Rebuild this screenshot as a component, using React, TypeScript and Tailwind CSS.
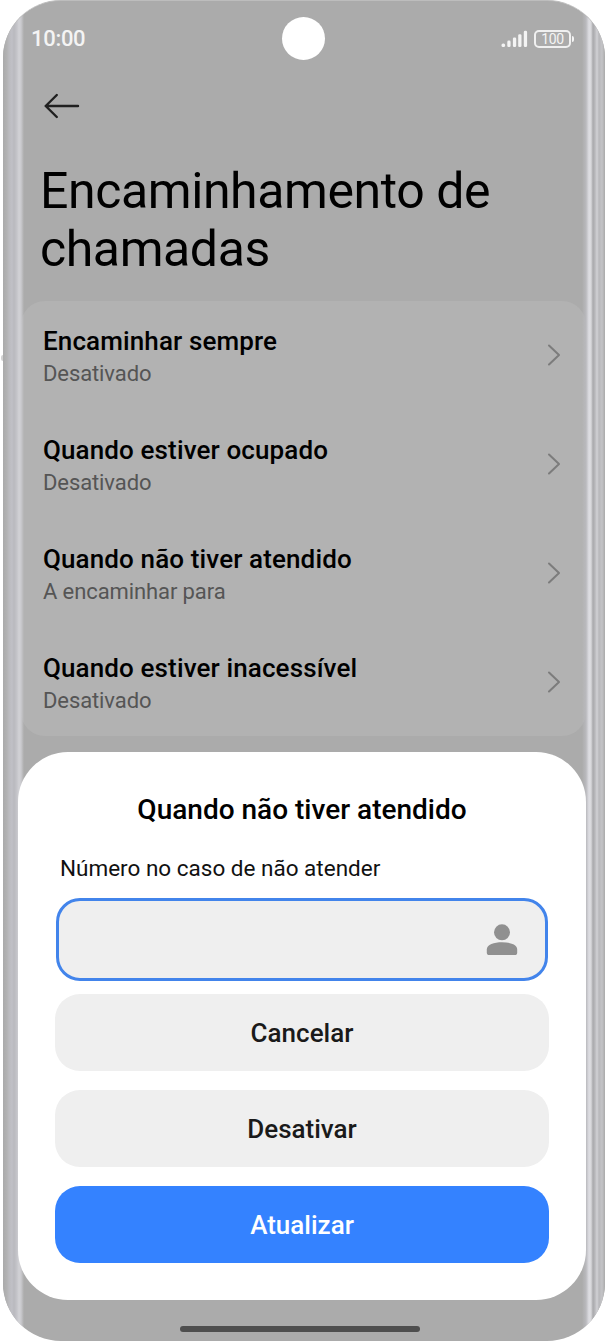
import React from "react";

interface Option {
  title: string;
  status: string;
}

const options: Option[] = [
  { title: "Encaminhar sempre", status: "Desativado" },
  { title: "Quando estiver ocupado", status: "Desativado" },
  { title: "Quando não tiver atendido", status: "A encaminhar para" },
  { title: "Quando estiver inacessível", status: "Desativado" },
];

function StatusBar() {
  return (
    <div className="h-[76px] pl-[28px] pr-[31px] flex justify-between items-center text-[#f4f4f4] relative">
      <span className="text-[22px] leading-[26px] font-medium tracking-[-0.3px]">
        10:00
      </span>
      <div className="absolute left-[279px] top-[16px] w-[43px] h-[43px] rounded-full bg-white" />
      <div className="flex items-center gap-[6px] pb-[1px]">
        <svg width="27" height="18" viewBox="0 0 27 18" fill="currentColor">
          <rect x="0.5" y="13.4" width="3.6" height="3.6" rx="1.5" />
          <rect x="6.3" y="10.6" width="3.3" height="6.4" rx="1.3" />
          <rect x="11.9" y="7.4" width="3.3" height="9.6" rx="1.3" />
          <rect x="17.2" y="4.2" width="3.3" height="12.8" rx="1.3" />
          <rect x="22.8" y="0.8" width="3.3" height="16.2" rx="1.3" />
        </svg>
        <div className="flex items-center gap-[1px]">
          <div className="w-[37px] h-[18px] rounded-[5px] border-2 border-[#f0f0f0] flex items-center justify-center text-[14px] leading-none tracking-[-0.3px]">
            100
          </div>
          <div className="w-[2px] h-[6px] rounded-r-full bg-[#f4f4f4]" />
        </div>
      </div>
    </div>
  );
}

function OptionRow({ title, status }: Option) {
  return (
    <li className="h-[108.8px] pl-[22px] pr-[25px] flex justify-between items-center">
      <div className="pt-[5px]">
        <p className="text-[26px] leading-[32px] font-medium tracking-[0.12px] text-black">
          {title}
        </p>
        <p className="text-[22px] leading-[33px] tracking-[-0.1px] text-[#555]">
          {status}
        </p>
      </div>
      <svg
        width="14"
        height="24"
        viewBox="0 0 14 24"
        fill="none"
        stroke="#7c7c7c"
        strokeWidth="2"
        strokeLinecap="round"
        strokeLinejoin="round"
      >
        <path d="M2 2.5 12 12 2 21.5" />
      </svg>
    </li>
  );
}

function ForwardSheet() {
  return (
    <div className="mt-[16px] ml-[15px] mr-[19px] h-[548px] rounded-[50px] bg-white px-[37px] pt-[38px] relative z-20">
      <h2 className="text-[28px] leading-[40px] font-medium text-center text-black">
        Quando não tiver atendido
      </h2>
      <p className="mt-[21px] pl-[5px] text-[22.5px] leading-[34px] text-[#111]">
        Número no caso de não atender
      </p>
      <div className="mt-[13px] mx-[1px] h-[83px] rounded-[24px] border-[3px] border-[#4284eb] bg-[#efefef] flex justify-end items-center pr-[27px]">
        <svg width="32" height="32" viewBox="0 0 32 32" fill="#909090">
          <circle cx="16" cy="8.3" r="8" />
          <path d="M0.8 25.5C0.8 20.5 8 18.2 16 18.2S31.2 20.5 31.2 25.5V28.4Q31.2 31 28.6 31H3.4Q0.8 31 0.8 28.4Z" />
        </svg>
      </div>
      <div className="mt-[13px] flex flex-col gap-[19px] text-[26px] font-medium">
        <button className="h-[77px] pt-[2px] rounded-[25px] bg-[#efefef] text-[#1a1a1a]">
          Cancelar
        </button>
        <button className="h-[77px] pt-[2px] rounded-[25px] bg-[#efefef] text-[#1a1a1a]">
          Desativar
        </button>
        <button className="h-[77px] pt-[2px] rounded-[25px] bg-[#3482ff] text-white">
          Atualizar
        </button>
      </div>
    </div>
  );
}

function App() {
  return (
    <div className="w-[605px] h-[1342px] bg-white pl-[3px] overflow-hidden relative font-['Roboto','Liberation_Sans',sans-serif]">
      <div className="absolute left-[1px] top-[355px] w-[4px] h-[6px] rounded-full bg-[#d2d2d2]" />
      <div className="w-[602px] h-[1341px] rounded-[58px] overflow-hidden relative bg-[#ababab] border-t border-[#bdbdbd]">
        {/* metal edges of the phone, above the list and below the sheet */}
        <div className="absolute z-10 left-0 inset-y-0 w-[23px] bg-[linear-gradient(90deg,#aaa_0px,#b3b3b4_4px,#bbbbbf_6px,#c0c0c6_9px,#b9b9be_11px,#c5c5ca_14px,#d2d2d6_16px,#cacace_18px,#ababab00_21px)]" />
        <div className="absolute z-10 right-0 inset-y-0 w-[23px] bg-[linear-gradient(90deg,#ababab00_0px,#b9b9bd_4px,#dedee3_7px,#d8d8db_9px,#a9a9ac_11px,#b9b9bc_13px,#d1d1d5_15px,#b8b8bb_17px,#c4c4c7_20px,#aaa_23px)]" />
        <StatusBar />
        <div className="h-[58px] pl-[41px] flex items-center">
          <svg
            width="36"
            height="26"
            viewBox="0 0 36 26"
            fill="none"
            stroke="#202020"
            strokeWidth="2.4"
            strokeLinecap="round"
            strokeLinejoin="round"
          >
            <path d="M12.8 2 1.7 13 12.8 24M1.7 13H34" />
          </svg>
        </div>
        <h1 className="mt-[27px] pl-[37px] text-[50px] leading-[58px] tracking-[-0.42px] text-black">
          Encaminhamento de
          <br />
          chamadas
        </h1>
        <ul className="mt-[23px] ml-[18px] mr-[19px] h-[435px] rounded-[24px] bg-[#b2b2b2]">
          {options.map((option) => (
            <OptionRow key={option.title} {...option} />
          ))}
        </ul>
        <ForwardSheet />
        <div className="mt-[26px] ml-[177px] w-[240px] h-[6px] rounded-full bg-[#4e4e4e]" />
      </div>
    </div>
  );
}

export default App;
